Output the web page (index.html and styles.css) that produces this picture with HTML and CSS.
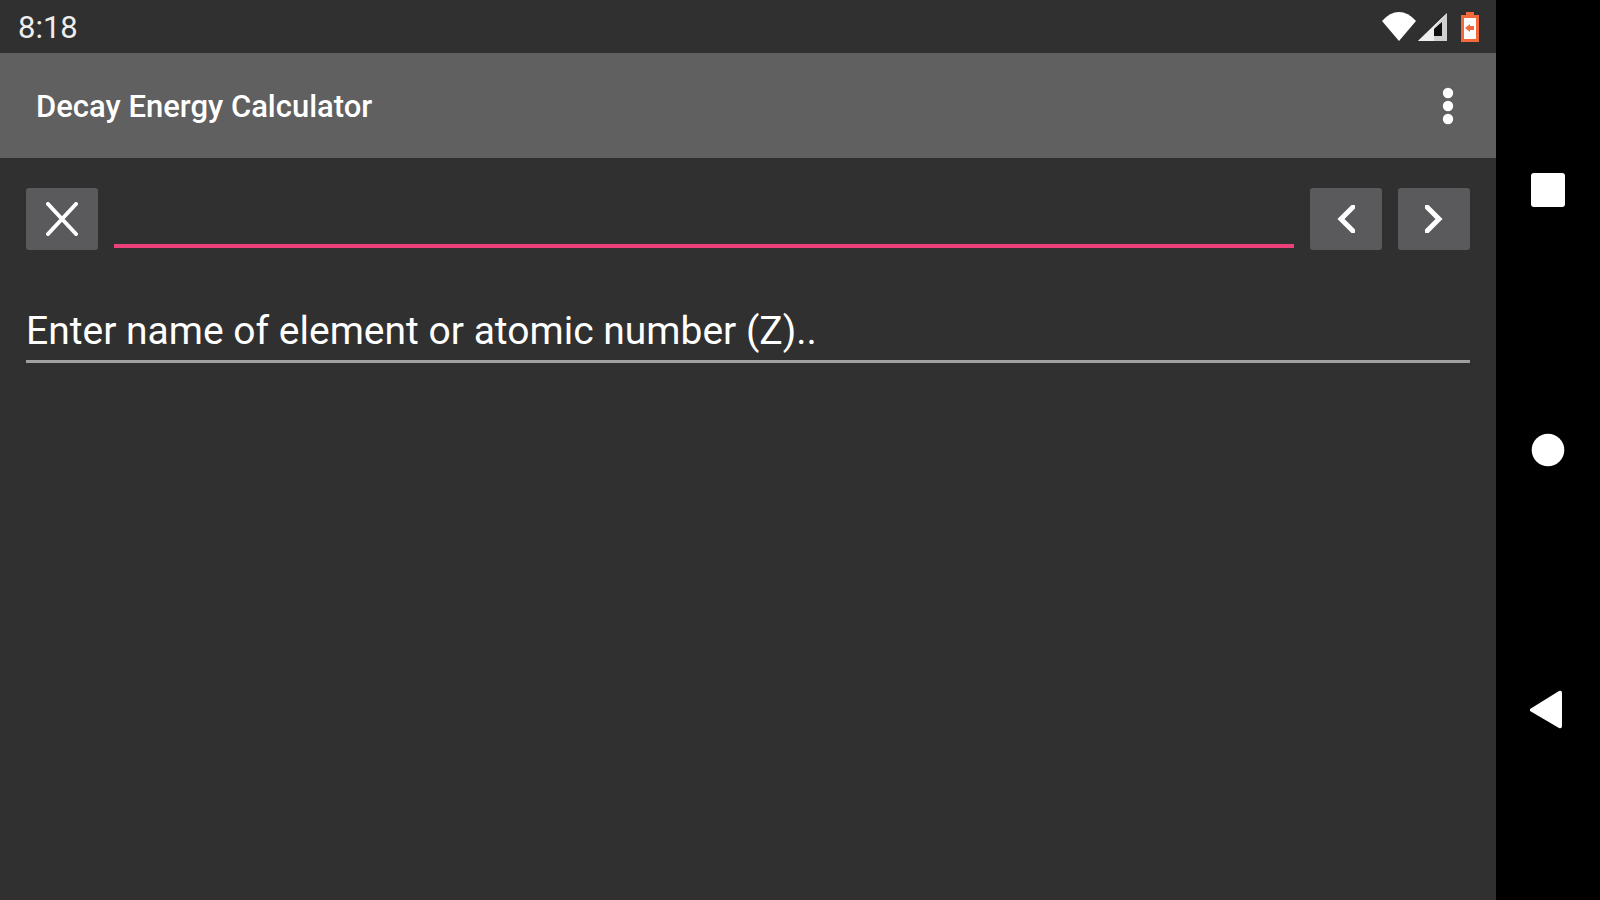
FILE: index.html
```
<!DOCTYPE html>
<html lang="en">
<head>
    <meta charset="utf-8">
    <title>Decay Energy Calculator</title>
    <link rel="stylesheet" href="styles.css">
</head>
<body>
    <div class="screen">
        <div class="status-bar">
            <span class="clock">8:18</span>
            <div class="status-icons">
                <svg class="wifi" width="36" height="32" viewBox="0 0 36 32">
                    <path d="M17 30 L0 10 Q8 1 17 1 Q26 1 34 10 Z" fill="#fff"/>
                </svg>
                <svg class="signal" width="30" height="30" viewBox="0 0 30 30">
                    <path d="M29 1 V29 H0 Z" fill="#d0d0d0"/>
                    <path d="M24 10 V24 H16 V17 Z" fill="#111"/>
                    <path d="M29 1 L16 16 V29 H0 Z" fill="#f0f0f0"/>
                    <path d="M22 12 V24 H16 V18 Z" fill="#111"/>
                </svg>
                <svg class="battery" width="20" height="30" viewBox="0 0 20 30">
                    <path d="M6 0 H14 V3 H19 V30 H1 V3 H6 Z" fill="#f2693c"/>
                    <path d="M4 6 H16 V27 H4 Z" fill="#fff"/>
                    <path d="M5 16 L10 12 V14 H14 V18 H10 V20 Z" fill="#f2693c"/>
                </svg>
            </div>
        </div>

        <header class="app-bar">
            <h1>Decay Energy Calculator</h1>
            <button class="menu" aria-label="More options">
                <svg width="12" height="38" viewBox="0 0 12 38" fill="#fff">
                    <circle cx="6" cy="6" r="5.2"/>
                    <circle cx="6" cy="19" r="5.2"/>
                    <circle cx="6" cy="32" r="5.2"/>
                </svg>
            </button>
        </header>

        <main>
            <div class="search-row">
                <button class="tool" aria-label="Clear">
                    <svg width="32" height="34" viewBox="0 0 32 34">
                        <path d="M2 2 L30 32 M30 2 L2 32"/>
                    </svg>
                </button>
                <input class="search" type="text" aria-label="Search">
                <button class="tool" aria-label="Previous">
                    <svg class="thick" width="18" height="28" viewBox="0 0 18 28">
                        <path d="M16 2 L4 14 L16 26"/>
                    </svg>
                </button>
                <button class="tool" aria-label="Next">
                    <svg class="thick" width="18" height="28" viewBox="0 0 18 28">
                        <path d="M2 2 L14 14 L2 26"/>
                    </svg>
                </button>
            </div>
            <input class="result" type="text" aria-label="Result" value="Enter name of element or atomic number (Z).." readonly>
        </main>
    </div>

    <nav class="nav-bar">
        <button aria-label="Recent apps">
            <svg width="36" height="40" viewBox="0 0 36 40"><rect x="1" y="3" width="34" height="34" rx="3"/></svg>
        </button>
        <button aria-label="Home">
            <svg width="36" height="40" viewBox="0 0 36 40"><circle cx="18" cy="20" r="16.3"/></svg>
        </button>
        <button aria-label="Back">
            <svg width="36" height="40" viewBox="0 0 36 40"><path d="M0 19 L29 1 Q32 0 32 3 V36 Q32 39 29 38 L0 21 Z"/></svg>
        </button>
    </nav>
</body>
</html>
```

FILE: styles.css
```
* {
    box-sizing: border-box;
}

body {
    margin: 0;
    min-height: 100vh;
    display: flex;
    background-color: #303030;
    color: #fff;
    font-family: Roboto, sans-serif;
}

button {
    display: flex;
    align-items: center;
    justify-content: center;
    padding: 0;
    border: none;
    background: none;
    cursor: pointer;
}

.screen {
    flex: 1;
    min-width: 0;
}

.status-bar {
    display: flex;
    align-items: center;
    justify-content: space-between;
    height: 53px;
    padding: 0 16px 0 18px;
}

.clock {
    padding-top: 2px;
    font-size: 31px;
    color: #eee;
}

.status-icons {
    display: flex;
    align-items: center;
}

.battery {
    margin-left: 12px;
}

.app-bar {
    display: flex;
    align-items: center;
    justify-content: space-between;
    height: 105px;
    padding: 0 28px 0 36px;
    background-color: #606060;
}

h1 {
    margin: 0;
    padding-top: 2px;
    font-size: 31px;
    font-weight: 500;
}

.menu {
    width: 40px;
    height: 64px;
}

main {
    padding: 30px 26px;
}

.search-row {
    display: flex;
    gap: 16px;
}

.tool {
    width: 72px;
    height: 62px;
    border-radius: 3px;
    background-color: #5a5a5c;
}

.tool svg {
    fill: none;
    stroke: #fff;
    stroke-width: 4;
    stroke-linecap: round;
}

.tool .thick {
    stroke-width: 5;
}

input {
    min-width: 0;
    padding: 0;
    border: none;
    border-radius: 0;
    outline: none;
    background: none;
    color: #fff;
    font-family: inherit;
    font-size: 39px;
}

.search {
    flex: 1;
    height: 60px;
    border-bottom: 4px solid #ec407a;
}

.result {
    display: block;
    width: 100%;
    height: 61px;
    margin-top: 52px;
    border-bottom: 3px solid #a0a0a0;
}

.nav-bar {
    display: flex;
    flex-direction: column;
    align-items: center;
    justify-content: space-between;
    width: 104px;
    padding: 18vh 0;
    background-color: #000;
}

.nav-bar button {
    width: 64px;
    height: 56px;
}

.nav-bar svg {
    fill: #fff;
}
```
